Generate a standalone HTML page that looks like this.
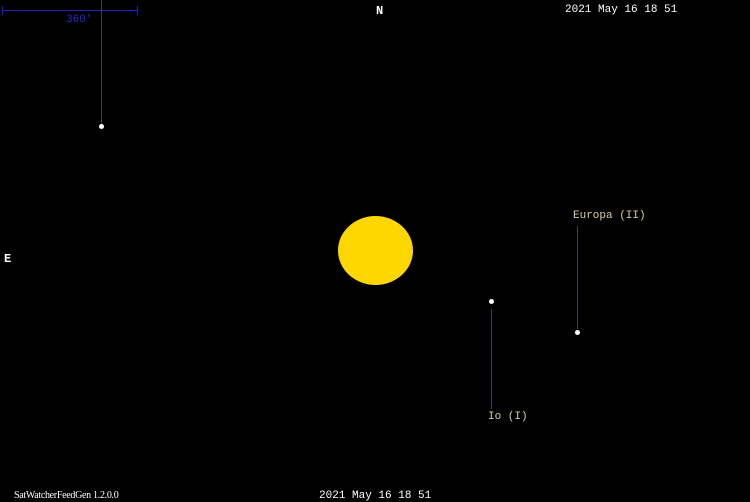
<!DOCTYPE html>
<html><head><style>
body{margin:0;width:750px;height:500px;background:#000;position:relative;overflow:hidden;font-family:"Liberation Mono",monospace;}
.t{position:absolute;white-space:nowrap;line-height:1;}
.ln{position:absolute;width:1px;background:#4a3858;}
.dot{position:absolute;width:5px;height:5px;border-radius:50%;background:#fff;}
</style></head><body>
<div style="position:absolute;left:2px;top:10px;width:135px;height:1px;background:#2020c0"></div>
<div style="position:absolute;left:2px;top:6px;width:1px;height:9px;background:#2020c0"></div>
<div style="position:absolute;left:137px;top:6px;width:1px;height:9px;background:#2020c0"></div>
<div class="t" style="left:66px;top:15px;font-size:11px;color:#2828d0">360'</div>
<div class="t" style="left:376px;top:5px;font-size:12px;font-weight:bold;color:#fff">N</div>
<div class="t" style="left:565px;top:5px;font-size:11px;color:#fff">2021 May 16 18 51</div>
<div class="t" style="left:4px;top:253px;font-size:12px;font-weight:bold;color:#fff">E</div>
<div class="ln" style="left:101px;top:0;height:124px"></div>
<div class="dot" style="left:99px;top:124px"></div>
<div style="position:absolute;left:338px;top:216px;width:75px;height:69px;border-radius:50%;background:#ffd700"></div>
<div class="t" style="left:573px;top:211px;font-size:11px;color:#d8d0a0">Europa (II)</div>
<div class="ln" style="left:577px;top:226px;height:103px"></div>
<div class="dot" style="left:575px;top:330px"></div>
<div class="dot" style="left:489px;top:299px"></div>
<div class="ln" style="left:491px;top:309px;height:100px"></div>
<div class="t" style="left:488px;top:412px;font-size:11px;color:#d8d0a0">Io (I)</div>
<div class="t" style="left:14px;top:491px;font-size:10px;color:#fff;font-family:'Liberation Serif',serif;letter-spacing:-0.3px">SatWatcherFeedGen 1.2.0.0</div>
<div class="t" style="left:319px;top:491px;font-size:11px;color:#fff">2021 May 16 18 51</div>
</body></html>
